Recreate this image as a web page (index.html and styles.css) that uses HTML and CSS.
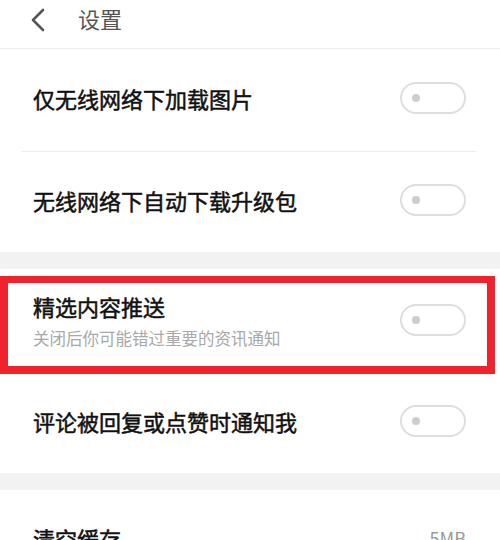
FILE: index.html
```html
<!DOCTYPE html>
<html lang="zh-CN">
<head>
    <meta charset="UTF-8">
    <meta name="viewport" content="width=device-width, initial-scale=1.0">
    <title>设置</title>
    <link rel="stylesheet" href="styles.css">
</head>
<body>
    <div class="header">
        <svg class="back" width="16" height="24" viewBox="0 0 16 24">
            <path d="M13 2 L3 12 L13 22" fill="none" stroke="#555" stroke-width="2.6" stroke-linecap="round" stroke-linejoin="round"/>
        </svg>
        <span class="header-title">设置</span>
    </div>

    <div class="group">
        <div class="row row-first">
            <div class="label">仅无线网络下加载图片</div>
            <div class="toggle"><span class="dot"></span></div>
        </div>
        <div class="divider"></div>
        <div class="row">
            <div class="label">无线网络下自动下载升级包</div>
            <div class="toggle"><span class="dot"></span></div>
        </div>
    </div>

    <div class="gap"></div>

    <div class="group">
        <div class="row row-tall">
            <div class="text">
                <div class="label">精选内容推送</div>
                <div class="sub">关闭后你可能错过重要的资讯通知</div>
            </div>
            <div class="toggle"><span class="dot"></span></div>
            <div class="mark"></div>
        </div>
        <div class="row">
            <div class="label">评论被回复或点赞时通知我</div>
            <div class="toggle"><span class="dot"></span></div>
        </div>
    </div>

    <div class="gap"></div>

    <div class="group">
        <div class="row">
            <div class="label">清空缓存</div>
            <div class="value">5MB</div>
        </div>
    </div>
</body>
</html>
```

FILE: styles.css
```css
html, body {
    overflow: hidden;
}
body {
    margin: 0;
    background-color: #fff;
    font-family: "Noto Sans CJK SC", "Noto Sans", sans-serif;
    color: #111;
}
.header {
    height: 48px;
    display: flex;
    align-items: center;
    padding-left: 30px;
    border-bottom: 1px solid #ececec;
}
.back {
    display: block;
    margin-top: -9px;
}
.header-title {
    margin-left: 32px;
    font-size: 22px;
    color: #555;
    line-height: 1;
    margin-top: -12px;
}
.row {
    height: 100px;
    box-sizing: border-box;
    padding: 0 34px 4px 33px;
    display: flex;
    align-items: center;
    justify-content: space-between;
    position: relative;
}
.row-first {
    height: 102px;
}
.row-tall {
    height: 104px;
    padding-bottom: 2px;
}
.label {
    font-size: 22px;
    font-weight: 400;
    line-height: 30px;
    -webkit-text-stroke: 0.5px #111;
}
.sub {
    margin-top: 6px;
    font-size: 16.5px;
    font-weight: 400;
    line-height: 22px;
    color: #a8a8a8;
}
.divider {
    height: 1px;
    margin: 0 24px 0 22px;
    background-color: #ececec;
}
.gap {
    height: 17px;
    background-color: #f2f2f2;
}
.toggle {
    width: 66px;
    height: 32px;
    box-sizing: border-box;
    border: 2px solid #dedede;
    border-radius: 16px;
    display: flex;
    align-items: center;
    padding-left: 10px;
}
.dot {
    width: 8px;
    height: 8px;
    border-radius: 50%;
    background-color: #cdcdcd;
}
.value {
    font-size: 18px;
    color: #999;
}
.mark {
    position: absolute;
    top: 7px;
    left: 0;
    width: 495px;
    height: 98px;
    box-sizing: border-box;
    border: 8px solid #f0222b;
    border-top-width: 7px;
    pointer-events: none;
}
```
